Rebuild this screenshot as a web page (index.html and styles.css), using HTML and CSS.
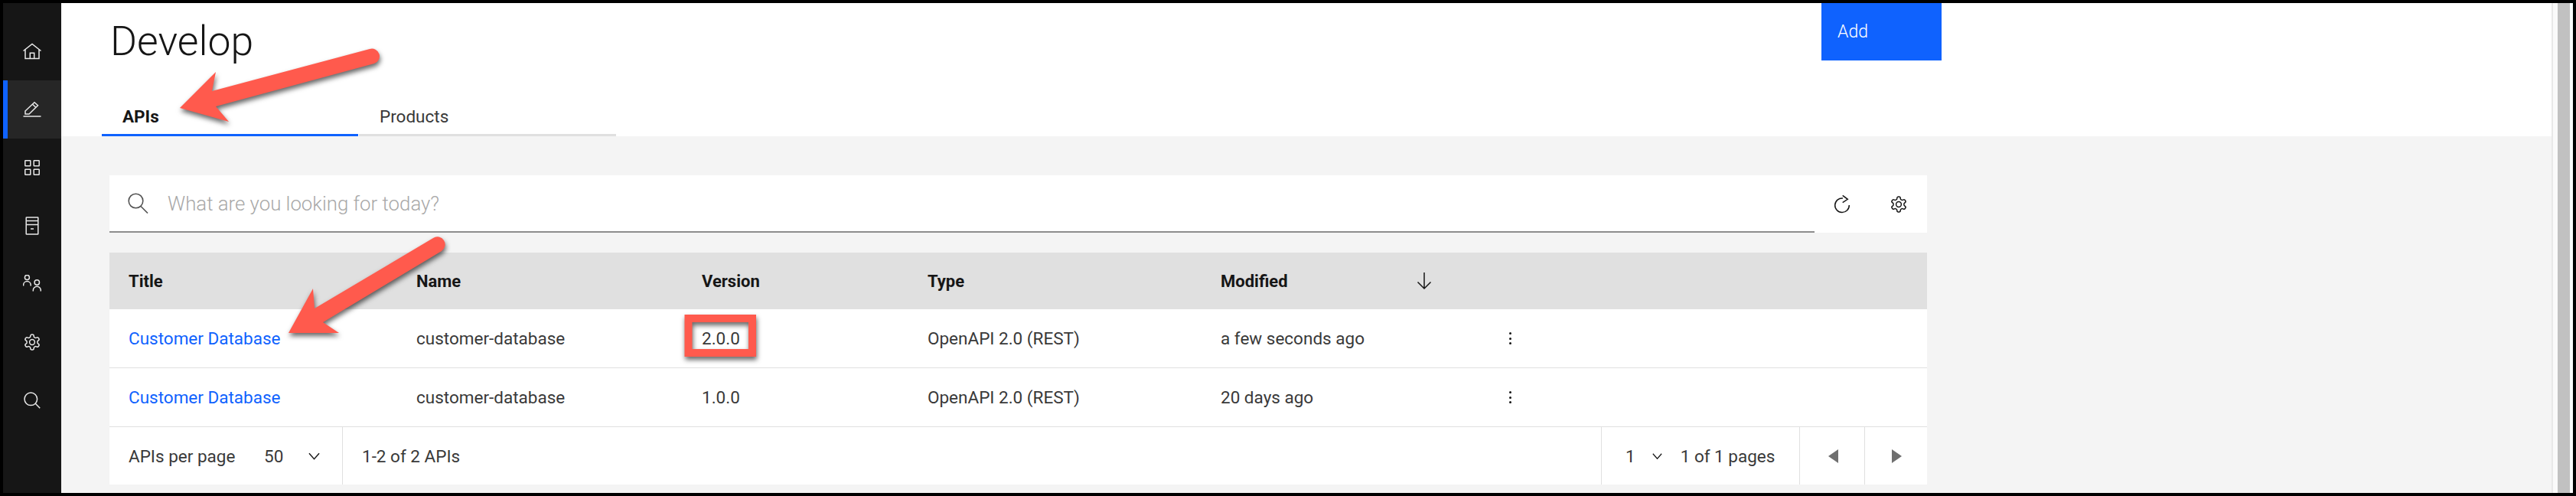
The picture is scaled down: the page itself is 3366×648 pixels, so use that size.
FILE: index.html
```html
<!DOCTYPE html>
<html lang="en">
<head>
    <meta charset="UTF-8">
    <title>Develop - APIs</title>
    <link rel="stylesheet" href="styles.css">
</head>
<body>
    <div class="app">
        <nav class="sidebar">
            <div class="nav-item">
                <svg class="icon" viewBox="0 0 24 24"><path d="M.5 11.5 12 2.5l11.5 9"/><path d="M3 9.5v12h18v-12"/><path d="M9.3 21.5v-7.2h5.4v7.2"/></svg>
            </div>
            <div class="nav-item active">
                <svg class="icon" viewBox="0 0 24 24"><path d="M.5 21h23"/><path d="M3 18v-4L15 2.8l4.5 4L8 18z"/><path d="m12.5 5.3 4.3 4"/></svg>
            </div>
            <div class="nav-item">
                <svg class="icon" viewBox="0 0 24 24"><rect x="2.8" y="2.8" width="7" height="7" rx=".5"/><rect x="14.2" y="2.8" width="7" height="7" rx=".5"/><rect x="2.8" y="14.2" width="7" height="7" rx=".5"/><rect x="14.2" y="14.2" width="7" height="7" rx=".5"/></svg>
            </div>
            <div class="nav-item">
                <svg class="icon" viewBox="0 0 24 24"><rect x="4.2" y="1" width="15.6" height="22" rx=".5"/><path d="M4.2 5.5h15.6M4.2 10.5h15.6M10 16h4"/></svg>
            </div>
            <div class="nav-item">
                <svg class="icon" viewBox="0 0 24 24"><circle cx="5.4" cy="3.4" r="3"/><path d="M.6 14.5v-1.2a4.8 4.8 0 0 1 9.6 0v1.2"/><circle cx="18.3" cy="10" r="3.2"/><path d="M13.3 21.5v-1.2a5 5 0 0 1 10 0v1.2"/></svg>
            </div>
            <div class="nav-item">
                <svg class="icon" viewBox="0 0 24 24"><path d="M12.22 2h-.44a2 2 0 0 0-2 2v.18a2 2 0 0 1-1 1.73l-.43.25a2 2 0 0 1-2 0l-.15-.08a2 2 0 0 0-2.73.73l-.22.38a2 2 0 0 0 .73 2.73l.15.1a2 2 0 0 1 1 1.72v.51a2 2 0 0 1-1 1.74l-.15.09a2 2 0 0 0-.73 2.73l.22.38a2 2 0 0 0 2.73.73l.15-.08a2 2 0 0 1 2 0l.43.25a2 2 0 0 1 1 1.73V20a2 2 0 0 0 2 2h.44a2 2 0 0 0 2-2v-.18a2 2 0 0 1 1-1.73l.43-.25a2 2 0 0 1 2 0l.15.08a2 2 0 0 0 2.73-.73l.22-.39a2 2 0 0 0-.73-2.73l-.15-.08a2 2 0 0 1-1-1.74v-.5a2 2 0 0 1 1-1.74l.15-.09a2 2 0 0 0 .73-2.73l-.22-.38a2 2 0 0 0-2.73-.73l-.15.08a2 2 0 0 1-2 0l-.43-.25a2 2 0 0 1-1-1.73V4a2 2 0 0 0-2-2z"/><circle cx="12" cy="12" r="3.4"/></svg>
            </div>
            <div class="nav-item">
                <svg class="icon" viewBox="0 0 24 24"><circle cx="10.3" cy="10.3" r="8.3"/><path d="m16.3 16.3 5.9 6"/></svg>
            </div>
        </nav>

        <div class="page">
            <header class="page-header">
                <div class="header-top">
                    <h1 class="page-title">Develop</h1>
                    <button class="add-btn">Add</button>
                </div>
                <div class="tabs">
                    <div class="tab selected">APIs</div>
                    <div class="tab">Products</div>
                </div>
            </header>

            <main class="content">
                <div class="toolbar">
                    <div class="search">
                        <svg class="search-icon" viewBox="0 0 27 27"><circle cx="10.5" cy="10.5" r="9.3"/><path d="m17 17.5 9 9"/></svg>
                        <span class="placeholder">What are you looking for today?</span>
                    </div>
                    <div class="tool-btn refresh-btn">
                        <svg class="tool-icon" viewBox="0 0 24 24"><path d="M13 4a9.3 9.3 0 1 0 8.3 9"/><path d="m12.7.3 6.6 5-6.6 4.4"/></svg>
                    </div>
                    <div class="tool-btn">
                        <svg class="tool-icon" viewBox="0 0 24 24"><path d="M12.22 2h-.44a2 2 0 0 0-2 2v.18a2 2 0 0 1-1 1.73l-.43.25a2 2 0 0 1-2 0l-.15-.08a2 2 0 0 0-2.73.73l-.22.38a2 2 0 0 0 .73 2.73l.15.1a2 2 0 0 1 1 1.72v.51a2 2 0 0 1-1 1.74l-.15.09a2 2 0 0 0-.73 2.73l.22.38a2 2 0 0 0 2.73.73l.15-.08a2 2 0 0 1 2 0l.43.25a2 2 0 0 1 1 1.73V20a2 2 0 0 0 2 2h.44a2 2 0 0 0 2-2v-.18a2 2 0 0 1 1-1.73l.43-.25a2 2 0 0 1 2 0l.15.08a2 2 0 0 0 2.73-.73l.22-.39a2 2 0 0 0-.73-2.73l-.15-.08a2 2 0 0 1-1-1.74v-.5a2 2 0 0 1 1-1.74l.15-.09a2 2 0 0 0 .73-2.73l-.22-.38a2 2 0 0 0-2.73-.73l-.15.08a2 2 0 0 1-2 0l-.43-.25a2 2 0 0 1-1-1.73V4a2 2 0 0 0-2-2z"/><circle cx="12" cy="12" r="3.4"/></svg>
                    </div>
                </div>

                <div class="table">
                    <div class="row head">
                        <div class="cell">Title</div>
                        <div class="cell">Name</div>
                        <div class="cell">Version</div>
                        <div class="cell">Type</div>
                        <div class="cell sort-cell">
                            Modified
                            <svg class="sort-icon" viewBox="0 0 20 24"><path d="M10 1v21M1.5 13.5 10 22l8.5-8.5"/></svg>
                        </div>
                        <div class="cell"></div>
                    </div>
                    <div class="row">
                        <div class="cell"><a class="link">Customer Database</a></div>
                        <div class="cell">customer-database</div>
                        <div class="cell">2.0.0</div>
                        <div class="cell">OpenAPI 2.0 (REST)</div>
                        <div class="cell">a few seconds ago</div>
                        <div class="cell"><div class="kebab"><i></i><i></i><i></i></div></div>
                    </div>
                    <div class="row">
                        <div class="cell"><a class="link">Customer Database</a></div>
                        <div class="cell">customer-database</div>
                        <div class="cell">1.0.0</div>
                        <div class="cell">OpenAPI 2.0 (REST)</div>
                        <div class="cell">20 days ago</div>
                        <div class="cell"><div class="kebab"><i></i><i></i><i></i></div></div>
                    </div>
                    <div class="pager">
                        <div class="per-page">
                            <span class="per-label">APIs per page</span>
                            <span class="per-value">50</span>
                            <svg class="chevron" viewBox="0 0 16 10"><path d="m1 1 7 8 7-8"/></svg>
                        </div>
                        <div class="range">1-2 of 2 APIs</div>
                        <div class="page-select">
                            <span class="page-value">1</span>
                            <svg class="chevron small" viewBox="0 0 16 10"><path d="m1 1 7 8 7-8"/></svg>
                            <span class="page-count">1 of 1 pages</span>
                        </div>
                        <div class="page-btn prev"><span class="tri-left"></span></div>
                        <div class="page-btn"><span class="tri-right"></span></div>
                    </div>
                </div>
            </main>
        </div>

        <div class="scrollbar"><div class="thumb"></div></div>
    </div>

    <!-- red callouts drawn on top of the screenshot -->
    <svg class="callouts" viewBox="0 0 3366 648">
        <path d="M235 141 282 94 277 119 483 64A9.8 9.8 0 0 1 489 83L282 139 299 159Z"/>
        <path d="M377 435 409 377 411 403 566 311A10 10 0 0 1 577 328L422 421 443 435Z"/>
        <rect class="callout-box" x="899.5" y="416" width="83.5" height="45"/>
    </svg>
</body>
</html>
```

FILE: styles.css
```css
* {
    margin: 0;
    padding: 0;
    box-sizing: border-box;
}

body {
    width: 3366px;
    height: 648px;
    padding: 4px;
    overflow: hidden;
    background: #000;
    font-family: 'Roboto', 'Liberation Sans', sans-serif;
    font-size: 22.5px;
    color: #393939;
}

.app {
    display: flex;
    height: 640px;
}

/* left rail */
.sidebar {
    width: 76px;
    padding-top: 25px;
    background: #161616;
    color: #e8e8e8;
}

.nav-item {
    height: 76px;
    display: flex;
    align-items: center;
    justify-content: center;
}

.nav-item.active {
    background: #262626;
    box-shadow: inset 6px 0 0 #0f62fe;
}

.icon {
    width: 24px;
    height: 24px;
    fill: none;
    stroke: currentColor;
    stroke-width: 1.5;
}

/* header */
.page {
    flex: 1;
    display: flex;
    flex-direction: column;
}

.page-header {
    height: 174px;
    background: #fff;
    display: flex;
    flex-direction: column;
    justify-content: space-between;
}

.header-top {
    display: flex;
    justify-content: space-between;
    align-items: flex-start;
    padding: 0 797px 0 64px;
}

.page-title {
    font-size: 53.5px;
    font-weight: 300;
    line-height: 60px;
    padding-top: 20px;
    color: #161616;
}

.add-btn {
    width: 157px;
    height: 75px;
    padding-left: 21px;
    border: none;
    background: #0f62fe;
    color: #fff;
    font-family: inherit;
    font-size: 23px;
    font-weight: 300;
    text-align: left;
}

.tabs {
    display: flex;
    height: 47px;
    padding-left: 50px;
    border-left: 3px solid #fbfbfb;
}

.tab {
    width: 336px;
    padding: 3px 0 0 27px;
    border-bottom: 3px solid #e0e0e0;
    margin-right: 1px;
    line-height: 36px;
    color: #393939;
}

.tab.selected {
    width: 335px;
    border-bottom-color: #0f62fe;
    font-weight: 700;
    color: #161616;
}

/* main area */
.content {
    flex: 1;
    padding: 51px 816px 0 63px;
    background: #f4f4f4;
}

.toolbar {
    display: flex;
    height: 75px;
    background: #fff;
}

.search {
    flex: 1;
    display: flex;
    align-items: center;
    gap: 25px;
    padding-left: 24px;
    border-bottom: 2px solid #8d8d8d;
}

.search-icon {
    width: 27px;
    height: 27px;
    fill: none;
    stroke: #525252;
    stroke-width: 1.6;
}

.placeholder {
    font-size: 25.8px;
    font-weight: 300;
    color: #a8a8a8;
}

.tool-btn {
    width: 75px;
    display: flex;
    align-items: center;
    justify-content: center;
}

.refresh-btn {
    width: 72px;
}

.tool-icon {
    width: 24px;
    height: 24px;
    fill: none;
    stroke: #161616;
    stroke-width: 1.5;
}

/* table */
.table {
    margin-top: 26px;
    background: #fff;
}

.row {
    display: grid;
    grid-template-columns: 376px 373px 295px 383px 380px 1fr;
    height: 77px;
    border-bottom: 1px solid #e0e0e0;
}

.row.head {
    height: 74px;
    border-bottom: none;
    background: #e0e0e0;
    font-size: 22px;
    font-weight: 700;
    color: #161616;
}

.cell {
    display: flex;
    align-items: center;
    padding-left: 25px;
}

.sort-cell {
    justify-content: space-between;
    padding-right: 79px;
}

.sort-icon {
    width: 20px;
    height: 24px;
    fill: none;
    stroke: #161616;
    stroke-width: 1.5;
}

.link {
    color: #0f62fe;
}

.kebab {
    display: flex;
    flex-direction: column;
    gap: 3.5px;
    margin-left: -3px;
}

.kebab i {
    width: 3px;
    height: 3px;
    border-radius: 50%;
    background: #161616;
}

/* pagination */
.pager {
    display: flex;
    height: 75px;
    color: #393939;
}

.per-page {
    width: 305px;
    display: flex;
    align-items: center;
    padding-left: 25px;
    border-right: 1px solid #e0e0e0;
}

.per-label {
    width: 177px;
}

.per-value {
    width: 58px;
}

.chevron {
    width: 15px;
    height: 10px;
    fill: none;
    stroke: #161616;
    stroke-width: 1.5;
}

.chevron.small {
    width: 13px;
    margin-left: 22px;
}

.range {
    flex: 1;
    display: flex;
    align-items: center;
    padding-left: 25px;
}

.page-select {
    width: 259px;
    display: flex;
    align-items: center;
    padding-left: 31px;
    border-left: 1px solid #e0e0e0;
}

.page-count {
    margin-left: 24px;
}

.page-btn {
    width: 82px;
    display: flex;
    align-items: center;
    justify-content: center;
    border-left: 1px solid #e0e0e0;
    padding-left: 2px;
}

.page-btn.prev {
    width: 85px;
}

.tri-left {
    border-top: 9px solid transparent;
    border-bottom: 9px solid transparent;
    border-right: 13px solid #6f6f6f;
}

.tri-right {
    border-top: 9px solid transparent;
    border-bottom: 9px solid transparent;
    border-left: 13px solid #6f6f6f;
}

/* browser scrollbar */
.scrollbar {
    width: 28px;
    padding: 0 4px 0 6px;
    border-left: 2px solid #e8e8e8;
    background: #fafafa;
}

.thumb {
    height: 100%;
    background: #c1c1c1;
}

/* red annotations */
.callouts {
    position: absolute;
    left: 0;
    top: 0;
    width: 3366px;
    height: 648px;
    fill: #ff5a4d;
    filter: drop-shadow(1px 4px 3px rgba(0, 0, 0, 0.6));
}

.callout-box {
    fill: none;
    stroke: #ff5a4d;
    stroke-width: 10;
}
```
